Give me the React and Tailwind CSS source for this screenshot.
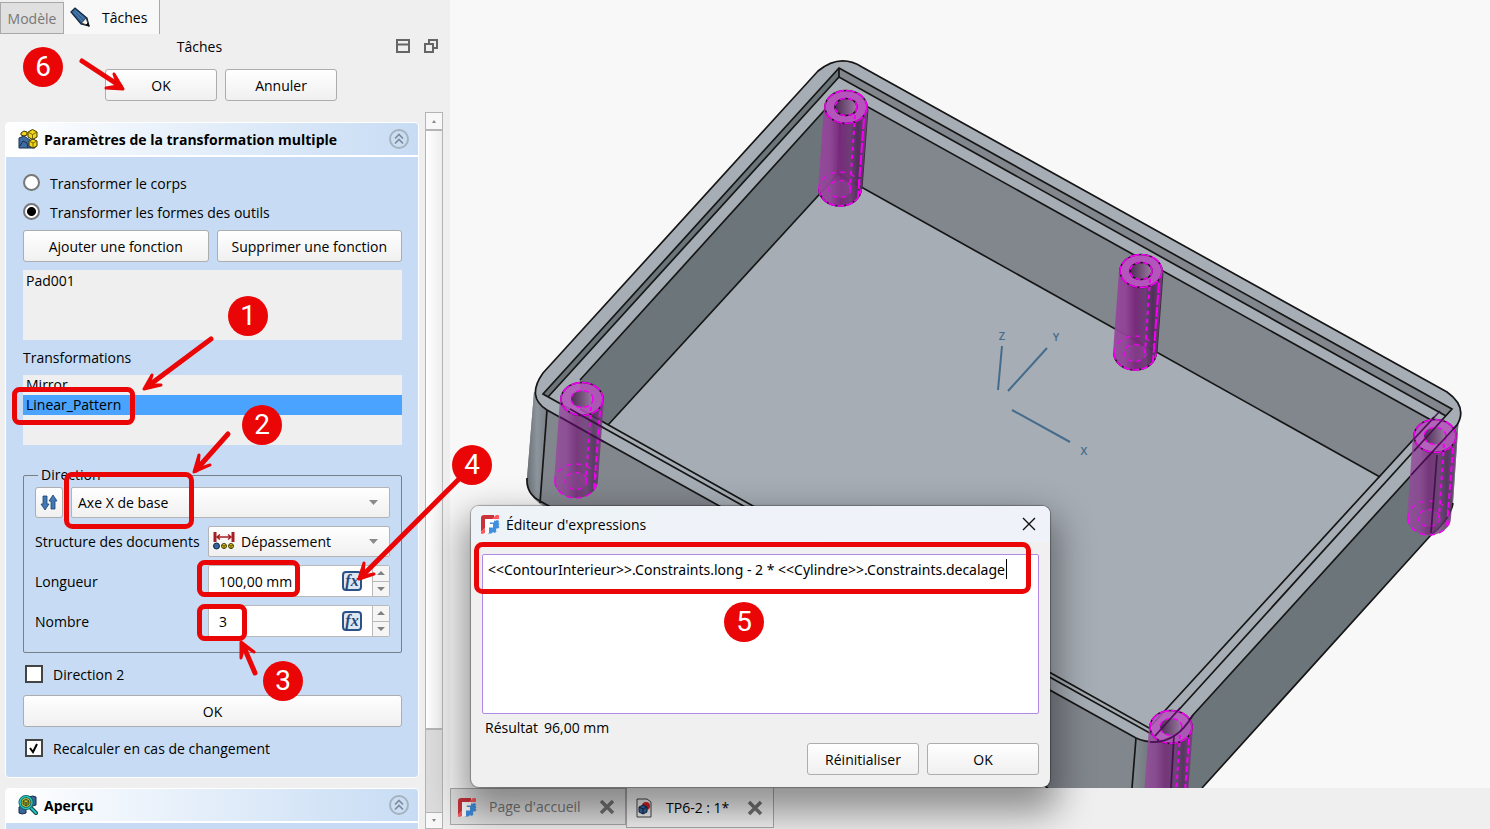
import { useState } from "react";

const RED = "#ea0606";

// -------------------------------
// ICONS
// -------------------------------
function PencilIcon() {
  return (
    <svg width="20" height="20" viewBox="0 0 20 20">
      <path d="M1 5 5 1l12 10 2 8-8-2z" fill="#2f5f93" stroke="#12263c" strokeWidth="1.200" />
      <path d="M3 4.500l10 10M4.500 3l11 10" stroke="#5d8dbd" strokeWidth="1" />
      <path d="M11.500 16l4.500-5 3 8z" fill="#f3f3ee" stroke="#222" strokeWidth=".8" />
      <path d="M16 18l2-2 1 3z" fill="#111" stroke="#111" />
    </svg>
  );
}

function MultiTransformIcon() {
  return (
    <svg width="20" height="20" viewBox="0 0 20 20">
      <path d="M1 9l5-2 6 4 5 3v5H1z" fill="#3f6da3" stroke="#173050" />
      <path d="M2 17l3-5 4 2 1 5" fill="none" stroke="#173050" />
      <path d="M10 3l4.500-2.500L19 3v5l-4.500 2.500L10 8z" fill="#f2d51c" stroke="#3b3300" />
      <path d="M10 3l4.500 2.500L19 3M14.500 5.500v5" fill="none" stroke="#7a6c00" />
      <path d="M3 4l3-2 3 1v3L6 7 3 6z" fill="#f2d51c" stroke="#3b3300" />
      <path d="M11 12l4-2 4 2v5l-4 2-4-2z" fill="#f2d51c" stroke="#3b3300" />
      <path d="M11 12l4 2 4-2M15 14v4" fill="none" stroke="#7a6c00" />
    </svg>
  );
}

function PreviewIcon() {
  return (
    <svg width="20" height="20" viewBox="0 0 20 20">
      <path d="M11 2q4-2 7 0v8q-3 2-7 0z" fill="#3b659a" stroke="#172c47" />
      <path d="M1 12q3-2 7 0v6q-4 2-7 0z" fill="#3b659a" stroke="#172c47" />
      <path d="M12 12l6 6" stroke="#0d4747" strokeWidth="4" strokeLinecap="round" />
      <path d="M12 12l6 6" stroke="#1fc3bf" strokeWidth="2" strokeLinecap="round" />
      <circle cx="8" cy="7.500" r="6" fill="#c9be3a" stroke="#0c5a5a" strokeWidth="3" />
      <circle cx="8" cy="7.500" r="6" fill="none" stroke="#25c4bf" strokeWidth="1.500" />
      <path d="M5 6l3-2 3 2v3l-3 2-3-2zM5 6l3 2 3-2M8 8v3" fill="#7d9a2e" stroke="#383c0a" strokeWidth=".8" />
    </svg>
  );
}

function CollapseIcon() {
  return (
    <svg width="20" height="20" viewBox="0 0 20 20" fill="none">
      <circle cx="10" cy="10" r="9" stroke="#a6b2be" strokeWidth="2" />
      <path d="M6 9.500 10 5.500l4 4M6 14.500l4-4 4 4" stroke="#7f8b97" strokeWidth="1.700" />
    </svg>
  );
}

function ReverseIcon() {
  return (
    <svg width="18" height="18" viewBox="0 0 18 18" fill="#4279b5" stroke="#1d4370" strokeWidth=".8">
      <path d="M3 2h4v8h2l-4 6-4-6h2z" />
      <path d="M11 15h4V7h2l-4-6-4 6h2z" />
    </svg>
  );
}

function ExtentIcon() {
  return (
    <svg width="22" height="18" viewBox="0 0 22 18">
      <path d="M2 0v10M20 0v10" stroke="#a51e24" strokeWidth="3" />
      <path d="M4 5h14M7 2.500 4 5l3 2.500M15 2.500 18 5l-3 2.500" fill="none" stroke="#a51e24" strokeWidth="1.500" />
      <circle cx="3.500" cy="14" r="3" fill="#34659b" stroke="#132840" />
      <circle cx="11" cy="14" r="2.500" fill="#e6cc1c" stroke="#443b00" />
      <circle cx="18" cy="14" r="2.500" fill="#e6cc1c" stroke="#443b00" />
      <path d="M9 13l2 1 2-1M16 13l2 1 2-1M11 14v3M18 14v3" fill="none" stroke="#443b00" strokeWidth=".8" />
    </svg>
  );
}

function FreeCadIcon() {
  return (
    <svg width="20" height="20" viewBox="0 0 20 20">
      <path
        d="M10 8h3l1-1.500 1.500.500L17 6l2 1-.500 2 1 1-1 1.500 1 1.500-1.500 1.500-1.500-.300-.500 2 .500 1.500-2 1.300-1.500-1-1.500 1.500H8V13h2z"
        fill="#418fde"
      />
      <path d="M5 5h9v3.500h-5V10h4v3.500H9V19l-4 .500z" fill="#fff" />
      <path d="M1 4q0-3 3-3h10v4H5v9l-4 4z" fill="#cb333b" />
      <path d="M12 5l4-4h2q1 0 1 1v3zM1 18l4-4v5l-3 1q-1 0-1-1z" fill="#ff585d" />
    </svg>
  );
}

function DocIcon() {
  return (
    <svg width="16" height="20" viewBox="0 0 16 20">
      <path d="M1 1h10l4 3v15H1z" fill="#f4f4f4" stroke="#444" />
      <circle cx="10" cy="8" r="4" fill="#d4222a" />
      <path d="M3 9l4-2 4 2v5l-4 2-4-2z" fill="#3566a0" stroke="#13294a" />
      <path d="M3 9l4 2 4-2M7 11v5" fill="none" stroke="#13294a" />
    </svg>
  );
}

function CrossIcon() {
  return (
    <svg width="16" height="16" viewBox="0 0 16 16">
      <path d="M2 2l12 12M14 2 2 14" stroke="#747474" strokeWidth="3.500" />
    </svg>
  );
}

// -------------------------------
// SMALL CONTROLS
// -------------------------------
function PushButton({ children, className = "h-8", ...props }) {
  return (
    <button
      className={`rounded-[3px] border border-[#adadad] bg-linear-to-b from-white to-[#f0f0f0] pt-px ${className}`}
      {...props}
    >
      {children}
    </button>
  );
}

function TaskHeader({ icon, title }) {
  return (
    <div className="flex h-[34px] items-center rounded-t border border-white bg-linear-to-r from-white to-[#c7dcf4] pl-3 pr-[9px]">
      {icon}
      <h2 className="ml-[6px] flex-1 pt-px font-bold">{title}</h2>
      <button aria-label={`Replier ${title}`}>
        <CollapseIcon />
      </button>
    </div>
  );
}

function ComboBox({ label, value, icon }) {
  return (
    <div className="relative flex h-[31px] min-w-0 flex-1">
      {icon && <span className="pointer-events-none absolute left-[5px] top-[6px]">{icon}</span>}
      <select
        aria-label={label}
        className={`w-full appearance-none rounded-[2px] border border-[#b4b4b4] bg-linear-to-b from-white to-[#f0f0f0] pt-px ${icon ? "pl-8" : "pl-[6px]"}`}
      >
        <option>{value}</option>
      </select>
      <svg className="pointer-events-none absolute right-3 top-[13px]" width="9" height="5" viewBox="0 0 9 5">
        <path d="M0 0h9L4.500 5z" fill="#8a8a8a" />
      </svg>
    </div>
  );
}

function SpinField({ id, label, value, onChange }) {
  return (
    <div className="flex h-8 items-center">
      <label htmlFor={id} className="w-[173px] shrink-0 pt-px">{label}</label>
      <div className="flex h-full min-w-0 flex-1 rounded-[2px] border border-[#b9b9b9] bg-white">
        <input
          id={id}
          value={value}
          onChange={(e) => onChange(e.target.value)}
          className="min-w-0 flex-1 bg-transparent pl-[10px] pt-px outline-none"
        />
        <button
          aria-label={`Formule ${label}`}
          className="mr-[10px] mt-[5px] flex h-5 w-5 shrink-0 items-center justify-center rounded-[4px] border-2 border-[#2b5288] bg-[#dfe6ef] font-['Liberation_Serif'] text-[16px] leading-none font-bold italic text-[#24497e]"
        >
          fx
        </button>
        <div className="flex w-[17px] shrink-0 flex-col border-l border-[#b9b9b9] bg-[#f5f5f5]">
          <button aria-label={`Augmenter ${label}`} className="flex flex-1 items-center justify-center border-b border-[#b9b9b9]">
            <svg width="8" height="4" viewBox="0 0 8 4"><path d="M0 4h8L4 0z" fill="#808080" /></svg>
          </button>
          <button aria-label={`Diminuer ${label}`} className="flex flex-1 items-center justify-center">
            <svg width="8" height="4" viewBox="0 0 8 4"><path d="M0 0h8L4 4z" fill="#808080" /></svg>
          </button>
        </div>
      </div>
    </div>
  );
}

function RadioRow({ label, checked, onChange }) {
  return (
    <label className="flex h-[29px] items-center gap-[10px]">
      <input
        type="radio"
        name="mode"
        checked={checked}
        onChange={onChange}
        className="h-[17px] w-[17px] appearance-none rounded-full border-2 border-[#777] bg-white checked:bg-[radial-gradient(circle,#000_0_4px,#fff_5px)]"
      />
      <span className="pt-[2px]">{label}</span>
    </label>
  );
}

function CheckRow({ label, checked, onChange }) {
  return (
    <label className="flex h-8 items-center gap-[10px] pl-[2px]">
      <span className="relative flex">
        <input
          type="checkbox"
          checked={checked}
          onChange={onChange}
          className="h-[18px] w-[18px] appearance-none border-2 border-[#444] bg-white"
        />
        {checked && (
          <svg className="pointer-events-none absolute left-1 top-1" width="10" height="11" viewBox="0 0 10 11">
            <path d="M1 5l3 4 4-8" fill="none" stroke="#000" strokeWidth="2" />
          </svg>
        )}
      </span>
      <span className="pt-px">{label}</span>
    </label>
  );
}

// -------------------------------
// 3D VIEW
// -------------------------------
const pillars = [
  { x: 846, y: 107, solid: true },
  { x: 1141, y: 271, solid: true },
  { x: 582, y: 399 },
  { x: 1435, y: 436 },
  { x: 1171, y: 727 },
];

const rimOutline =
  "M543 373 818 71Q840 53 862 67L1447 392Q1468 407 1457 425L1193 715Q1168 752 1136 738L547 410Q526 397 543 373z";

function Pillar({ x, y, solid }) {
  return (
    <g transform={`translate(${x} ${y})`} stroke="#f500f5" strokeWidth="1.600">
      <path
        d="M-22 0-28 82A22 17 0 0 0 16 82L22 0A22 17 0 0 1-22 0z"
        fill="url(#pillar)"
        fillOpacity={solid ? 0.95 : 0.8}
        stroke="none"
      />
      <ellipse rx="21" ry="16.500" fill="#b455bb" fillOpacity={solid ? 1 : 0.85} stroke="#2a0a2a" />
      <ellipse rx="21" ry="16.500" fill="none" strokeDasharray="9 2" />
      <ellipse rx="11" ry="8.500" fill="url(#hole)" stroke={solid ? "#2a0a2a" : "none"} />
      <ellipse rx="11" ry="8.500" fill="none" strokeDasharray="5 3" />
      <path d="M-27 82A21 17 0 0 1 15 82" fill="none" strokeDasharray="5 5" opacity=".8" />
      {solid && <path d="M-27 82A21 17 0 0 0 15 82" fill="none" stroke="#2a0a2a" />}
      <path d="M-27 82A21 17 0 0 0 15 82" fill="none" strokeDasharray={solid ? "7 2" : "6 4"} />
      <ellipse cx="-6" cy="82" rx="11" ry="8.500" fill="#8c4a94" fillOpacity=".6" strokeDasharray="5 4" opacity=".8" />
      <path d="M9 8 4 82" strokeDasharray="4 4" strokeWidth="2" />
      <path d="M18 12 12 90" strokeDasharray={solid ? "10 2" : "6 3"} strokeWidth="2" />
      {solid && <path d="M22 2 16 82" stroke="#3c3040" strokeWidth="1" />}
    </g>
  );
}

function Scene() {
  return (
    <svg
      className="h-full w-full"
      viewBox="450 0 1040 788"
      preserveAspectRatio="xMinYMin slice"
      role="img"
      aria-label="Vue 3D"
    >
      <defs>
        <linearGradient id="pillar">
          <stop offset="0" stopColor="#96489c" />
          <stop offset=".25" stopColor="#8f4396" />
          <stop offset=".45" stopColor="#772679" />
          <stop offset=".65" stopColor="#6b3a74" />
          <stop offset=".8" stopColor="#4c2c55" />
          <stop offset="1" stopColor="#87348d" />
        </linearGradient>
        <linearGradient id="hole">
          <stop offset="0" stopColor="#4d2b54" />
          <stop offset="1" stopColor="#9b7ca2" />
        </linearGradient>
        <linearGradient id="cornerLeft">
          <stop offset="0" stopColor="#697177" />
          <stop offset=".5" stopColor="#8d949b" />
          <stop offset="1" stopColor="#7c8188" />
        </linearGradient>
        <linearGradient id="cornerFront">
          <stop offset="0" stopColor="#858c92" />
          <stop offset=".5" stopColor="#687176" />
          <stop offset="1" stopColor="#6c757a" />
        </linearGradient>
      </defs>

      {/* outer walls */}
      <path d="M534 392 527 478Q526 494 540 504L1048 788H1202L1431 535Q1450 520 1453 503L1459 415 1150 720z" fill="#82868d" />
      <path d="M534 392 527 478Q526 492 540 503L547 410Q535 403 534 392z" fill="url(#cornerLeft)" />
      <path d="M1136 738 1132 788H1202L1431 535Q1450 520 1453 503L1459 415 1170 720z" fill="#6c757a" />
      <path d="M1136 738 1132 788H1175L1183 728z" fill="url(#cornerFront)" />

      {/* rim */}
      <path d={rimOutline} fill="#a6adb4" />
      {/* step of the rim */}
      <path d="M839 68 543 394 548 397 839 77z" fill="#6c757a" />
      <path d="M839 68 1452 409 1446 416 839 77z" fill="#82868d" />
      {/* inner walls */}
      <path d="M841 92 580 380V410L608 425 838 174z" fill="#6c757a" />
      <path d="M841 92 1431 420 1380 477 838 174z" fill="#82868d" />

      <g fill="none" stroke="#161616" strokeWidth="1.700">
        <path d={rimOutline} />
        <path d="M839 68 1452 409 1155 736 543 394zM839 68V77" />
        <path d="M548 397 839 77 1446 416" />
        <path d="M580 380 841 92 1431 420" />
        <path d="M608 425 838 174 1380 477M841 92 838 174" />
        <path d="M580 409 1149 728 1434 417" />
        <path d="M547 410 540 503M527 478Q526 494 540 501L1048 788" />
        <path d="M1136 738 1132 788M1202 788 1431 535Q1450 520 1453 503" />
      </g>

      {pillars.map((p) => (
        <Pillar key={p.x} {...p} />
      ))}

      {/* rim edges seen in front of the near pillars */}
      <g fill="none" stroke="#3d0a45" strokeWidth="1.700" opacity=".85">
        <path d="M560 417 604 442M570 409 604 428" />
        <path d="M1414 439 1440 411M1414 451 1443 419M1411 475 1457 425M1437 455 1431 533" />
        <path d="M1155 736 1180 708M1150 742Q1176 744 1193 715M1174 735 1171 788" />
      </g>

      {/* axis cross */}
      <g stroke="#456c8c" strokeWidth="2">
        <path d="M1002 346 998 390M1047 348 1008 391M1012 410 1070 442" />
      </g>
      <g fill="#456c8c" fontFamily="Open Sans" fontSize="11" fontWeight="600" textAnchor="middle">
        <text x="1002" y="340">Z</text>
        <text x="1056" y="341">Y</text>
        <text x="1084" y="455">X</text>
      </g>
    </svg>
  );
}

// -------------------------------
// EXPRESSION EDITOR
// -------------------------------
function ExpressionDialog() {
  const [text, setText] = useState(
    "<<ContourInterieur>>.Constraints.long - 2 * <<Cylindre>>.Constraints.decalage"
  );

  return (
    <div
      role="dialog"
      aria-label="Éditeur d'expressions"
      className="absolute left-[471px] top-[506px] w-[579px] overflow-hidden rounded-lg bg-[#f0f0f0] shadow-[0_0_1px_1px_rgba(0,0,0,0.3),0_18px_36px_8px_rgba(0,0,0,0.4)]"
    >
      <div className="flex h-9 items-center bg-linear-to-r from-[#edf3f7] to-[#f0f2fa] pl-[9px] pr-[14px]">
        <FreeCadIcon />
        <h2 className="ml-[6px] flex-1 pt-px">Éditeur d'expressions</h2>
        <button aria-label="Fermer">
          <svg width="14" height="14" viewBox="0 0 14 14">
            <path d="M1 1l12 12M13 1 1 13" stroke="#111" strokeWidth="1.400" />
          </svg>
        </button>
      </div>
      <div className="px-[11px] pb-3 pt-3">
        <div className="relative">
          <textarea
            aria-label="Expression"
            value={text}
            onChange={(e) => setText(e.target.value)}
            spellCheck="false"
            className="block h-40 w-full resize-none rounded-[2px] border border-[#b28ae6] bg-white px-[5px] py-[5px] font-['Noto_Sans',sans-serif] outline-none"
          />
          <span className="absolute right-8 top-[5px] h-5 w-px bg-black" />
        </div>
        <p className="mt-1 flex h-5 items-center gap-[6px] pl-[3px]">
          <span>Résultat</span>
          <span>96,00 mm</span>
        </p>
        <div className="mt-[5px] flex justify-end gap-2">
          <PushButton className="h-8 w-28">Réinitialiser</PushButton>
          <PushButton className="h-8 w-28">OK</PushButton>
        </div>
      </div>
    </div>
  );
}

// -------------------------------
// STEP MARKERS
// -------------------------------
function Step({ n, className }) {
  return (
    <span
      className={`absolute flex h-10 w-10 items-center justify-center rounded-full bg-[#ea0606] font-['Roboto'] text-[28px] leading-none text-white ${className}`}
    >
      {n}
    </span>
  );
}

function Markers() {
  return (
    <div className="pointer-events-none absolute inset-0">
      <svg className="absolute left-0 top-0" width="1100" height="829" fill="none" stroke={RED} strokeLinecap="round" strokeLinejoin="round">
        <g strokeWidth="5">
          <rect x="14.500" y="389.500" width="118" height="33" rx="5" />
          <rect x="66.500" y="474.500" width="125" height="52" rx="6" />
          <rect x="199.500" y="562.500" width="98" height="32" rx="5" />
          <rect x="199.500" y="606.500" width="45" height="32" rx="5" />
          <rect x="476.500" y="544.500" width="552" height="47" rx="6" />
        </g>
        <g strokeWidth="5">
          <path d="M82 61 120 86" />
          <path d="M211 339 148 386" />
          <path d="M228 434 196 470" />
          <path d="M255 673 243 645" />
          <path d="M462 476 361 577" />
        </g>
        <g strokeWidth="3" fill={RED}>
          <path d="M114 74 123 89 106 88 118 86z" />
          <path d="M152 375 144 389 161 385 149 385z" />
          <path d="M199 455 194 472 210 465 198 469z" />
          <path d="M241 658 241 642 254 652 244 646z" />
          <path d="M364 563 359 579 374 574 363 576z" />
        </g>
      </svg>
      <Step n="1" className="left-[228px] top-[296px]" />
      <Step n="2" className="left-[242px] top-[405px]" />
      <Step n="3" className="left-[263px] top-[661px]" />
      <Step n="4" className="left-[452px] top-[445px]" />
      <Step n="5" className="left-[724px] top-[602px]" />
      <Step n="6" className="left-[23px] top-[47px]" />
    </div>
  );
}

// -------------------------------
// TASK PANEL
// -------------------------------
function TaskPanel() {
  const [mode, setMode] = useState("tools");
  const [length, setLength] = useState("100,00 mm");
  const [count, setCount] = useState("3");
  const [second, setSecond] = useState(false);
  const [refresh, setRefresh] = useState(true);

  return (
    <aside className="flex w-[450px] shrink-0 flex-col bg-[#efefef]">
      <div className="flex h-[34px] items-end">
        <button className="h-8 w-16 border border-[#a8a8a8] bg-[#e0e0e0] pt-px text-[#777]">Modèle</button>
        <button className="flex h-full w-24 items-center gap-3 border-r border-[#a8a8a8] bg-[#f8f8f8] pl-[6px]">
          <PencilIcon />
          <span className="pt-px">Tâches</span>
        </button>
      </div>

      <div className="flex h-6 items-center pr-[11px]">
        <h1 className="flex-1 pl-1 pt-px text-center">Tâches</h1>
        <button aria-label="Réduire" className="mr-3">
          <svg width="16" height="16" viewBox="0 0 16 16" fill="none" stroke="#666" strokeWidth="2">
            <path d="M2 2h12v12H2zM2 6.500h12" />
          </svg>
        </button>
        <button aria-label="Détacher">
          <svg width="16" height="16" viewBox="0 0 16 16" fill="none" stroke="#666" strokeWidth="2">
            <path d="M6 6V2h8v8h-4M2 6h8v8H2z" />
          </svg>
        </button>
      </div>

      <div className="mt-[11px] flex justify-center gap-2 pr-2">
        <PushButton className="h-8 w-28">OK</PushButton>
        <PushButton className="h-8 w-28">Annuler</PushButton>
      </div>

      <div className="mt-[11px] flex min-h-0 flex-1 overflow-hidden">
        <div className="min-w-0 flex-1 pl-[5px] pr-[6px] pt-[10px]">
          <TaskHeader icon={<MultiTransformIcon />} title="Paramètres de la transformation multiple" />
          <div className="rounded-b border border-white bg-[#c7dcf4] pb-[13px] pl-[17px] pr-4 pt-[11px]">
            <RadioRow label="Transformer le corps" checked={mode === "body"} onChange={() => setMode("body")} />
            <RadioRow label="Transformer les formes des outils" checked={mode === "tools"} onChange={() => setMode("tools")} />

            <div className="mt-1 grid grid-cols-2 gap-2">
              <PushButton>Ajouter une fonction</PushButton>
              <PushButton>Supprimer une fonction</PushButton>
            </div>

            <ul className="mt-2 h-[70px] bg-[#efefef] leading-5">
              <li className="px-[3px] pt-px">Pad001</li>
            </ul>

            <p className="mb-[7px] mt-2 leading-5">Transformations</p>
            <ul className="h-[70px] bg-[#efefef] leading-5">
              <li className="px-[3px]">Mirror</li>
              <li className="bg-[#49a3ff] px-[3px]">Linear_Pattern</li>
            </ul>

            <fieldset className="mt-5 min-w-0 rounded-[2px] border border-[#777f88] px-[11px] pb-[15px]">
              <legend className="ml-[3px] px-[3px] leading-5">Direction</legend>
              <div className="mt-[2px] flex flex-col gap-2">
                <div className="flex gap-2">
                  <PushButton aria-label="Inverser la direction" className="flex h-[31px] w-7 shrink-0 items-center justify-center">
                    <ReverseIcon />
                  </PushButton>
                  <ComboBox label="Axe" value="Axe X de base" />
                </div>
                <div className="flex items-center">
                  <span className="w-[173px] shrink-0 whitespace-nowrap pt-px">Structure des documents</span>
                  <ComboBox label="Structure des documents" value="Dépassement" icon={<ExtentIcon />} />
                </div>
                <SpinField id="length" label="Longueur" value={length} onChange={setLength} />
                <SpinField id="count" label="Nombre" value={count} onChange={setCount} />
              </div>
            </fieldset>

            <div className="mt-[5px]">
              <CheckRow label="Direction 2" checked={second} onChange={() => setSecond(!second)} />
            </div>
            <PushButton className="my-[5px] h-8 w-full">OK</PushButton>
            <CheckRow label="Recalculer en cas de changement" checked={refresh} onChange={() => setRefresh(!refresh)} />
          </div>

          <div className="mt-[10px]">
            <TaskHeader icon={<PreviewIcon />} title="Aperçu" />
            <div className="h-10 border border-white bg-[#c7dcf4]" />
          </div>
        </div>

        {/* scrollbar */}
        <div className="mr-[7px] flex w-[18px] shrink-0 flex-col border border-[#b4b4b4] bg-[#dcdcdc]">
          <span className="flex h-4 items-center justify-center bg-[#f8f8f8]">
            <svg width="4" height="3" viewBox="0 0 4 3"><path d="M0 3h4L2 0z" fill="#888" /></svg>
          </span>
          <span className="h-[601px] border-y-2 border-[#b4b4b4] bg-linear-to-r from-white to-[#eeeeee]" />
          <span className="flex-1" />
          <span className="flex h-4 items-center justify-center border-t border-[#b4b4b4] bg-[#f8f8f8]">
            <svg width="4" height="3" viewBox="0 0 4 3"><path d="M0 0h4L2 3z" fill="#888" /></svg>
          </span>
        </div>
      </div>
    </aside>
  );
}

export default function App() {
  return (
    <div className="relative flex h-screen overflow-hidden bg-[#f8f8f8] font-['Open_Sans',sans-serif] text-[14px] leading-5 text-black">
      <TaskPanel />

      <main className="flex min-w-0 flex-1 flex-col">
        <div className="min-h-0 flex-1">
          <Scene />
        </div>
        <div className="flex h-[41px] items-start bg-[#efefef]">
          <div className="flex h-[37px] w-44 items-center border border-[#a8a8a8] bg-[#e0e0e0] pl-[6px] pr-[10px] text-[#777]">
            <FreeCadIcon />
            <a href="#accueil" className="ml-3 flex-1 pt-px">Page d'accueil</a>
            <button aria-label="Fermer Page d'accueil"><CrossIcon /></button>
          </div>
          <div className="flex h-10 w-[148px] items-center border border-t-0 border-[#a8a8a8] bg-[#f4f4f4] pl-[9px] pr-[10px]">
            <DocIcon />
            <a href="#tp6" className="ml-[14px] flex-1 pt-px">TP6-2 : 1*</a>
            <button aria-label="Fermer TP6-2"><CrossIcon /></button>
          </div>
        </div>
      </main>

      <ExpressionDialog />
      <Markers />
    </div>
  );
}
